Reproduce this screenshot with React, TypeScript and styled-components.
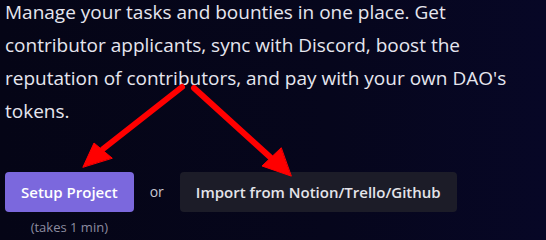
import React from "react";
import styled, { createGlobalStyle } from "styled-components";

const Global = createGlobalStyle`
  html, body { margin: 0; padding: 0; }
  body {
    width: 546px;
    height: 240px;
    overflow: hidden;
    background: linear-gradient(90deg, #050516 0%, #06061c 60%, #070726 100%);
    font-family: "Open Sans", "Noto Sans", sans-serif;
  }
`;

const Page = styled.div`
  position: relative;
  width: 546px;
  height: 240px;
  padding: 0 0 0 5px;
  box-sizing: border-box;
`;

const Lead = styled.p`
  margin: -4px 0 0 0;
  color: #e6e6ef;
  font-size: 19px;
  line-height: 33px;
  width: 520px;
`;

const Actions = styled.div`
  display: flex;
  align-items: flex-start;
  gap: 16px;
  margin-top: 44px;
`;

const Stack = styled.div`
  display: flex;
  flex-direction: column;
  align-items: center;
  gap: 6px;
`;

const Button = styled.button<{ $primary?: boolean }>`
  height: 40px;
  padding: 0 16px;
  border: none;
  border-radius: 4px;
  background: ${(p) => (p.$primary ? "#7b68dd" : "#1c1c28")};
  color: ${(p) => (p.$primary ? "#ffffff" : "#e4e4ea")};
  font-family: "Open Sans", "Noto Sans", sans-serif;
  font-weight: 600;
  font-size: 15px;
  cursor: pointer;
`;

const Note = styled.span`
  color: #8c8ca0;
  font-size: 13px;
`;

const Or = styled.span`
  color: #c8c8d2;
  font-size: 14px;
  line-height: 40px;
`;

const Overlay = styled.svg`
  position: absolute;
  left: 0;
  top: 0;
  pointer-events: none;
`;

export default function App() {
  return (
    <>
      <Global />
      <Page>
        <Lead>
          Manage your tasks and bounties in one place. Get contributor applicants,
          sync with Discord, boost the reputation of contributors, and pay with your
          own DAO's tokens.
        </Lead>
        <Actions>
          <Stack>
            <Button $primary>Setup Project</Button>
            <Note>(takes 1 min)</Note>
          </Stack>
          <Or>or</Or>
          <Button>Import from Notion/Trello/Github</Button>
        </Actions>
        <Overlay width="546" height="240" viewBox="0 0 546 240">
          <g fill="#ff0000" stroke="#ff0000" strokeLinecap="round">
            <line x1="182" y1="91" x2="103" y2="153" strokeWidth="6" />
            <polygon points="83,171 94,147 112,162" strokeWidth="1" />
            <line x1="194" y1="92" x2="270" y2="161" strokeWidth="6" />
            <polygon points="291,180 262,170 281,152" strokeWidth="1" />
          </g>
        </Overlay>
      </Page>
    </>
  );
}
